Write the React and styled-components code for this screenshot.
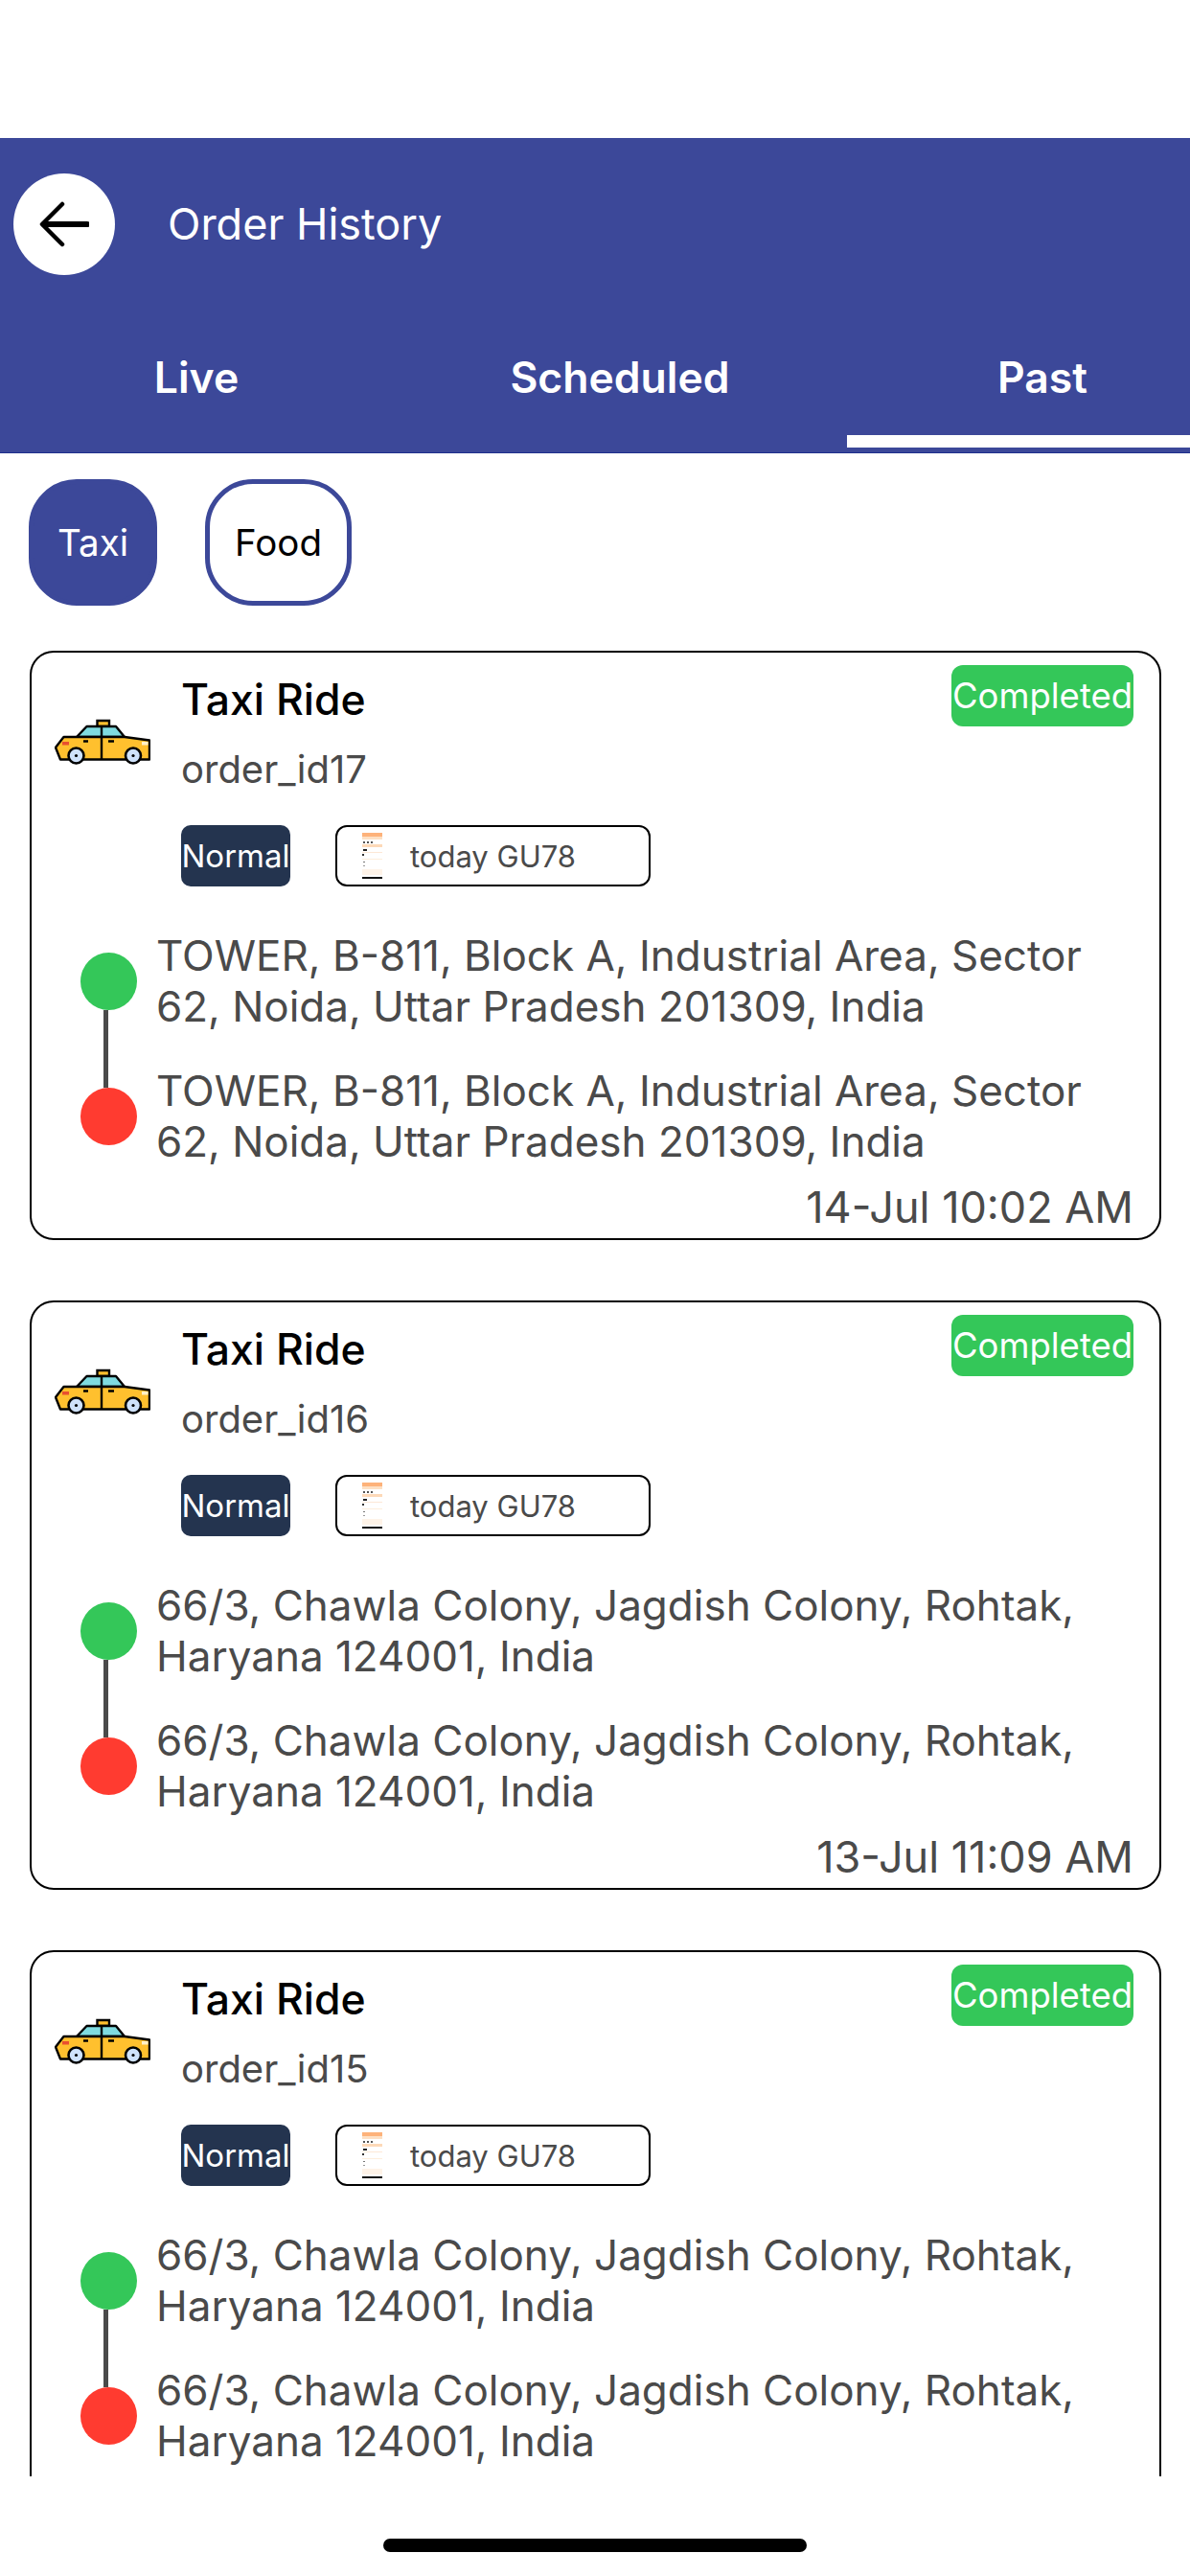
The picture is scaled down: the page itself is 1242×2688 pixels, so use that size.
import React from 'react';
import styled, { createGlobalStyle } from 'styled-components';

const Colors = {
  primary: '#3c4899',
  green: '#34c759',
  red: '#ff3b30',
  navy: '#24344f',
  text: '#4a4a4a',
};

const GlobalStyle = createGlobalStyle`
  * { box-sizing: border-box; }
  html, body { margin: 0; padding: 0; background: #fff; }
  body { font-family: Inter, "Noto Sans", sans-serif; }
  p { margin: 0; }
`;

const Page = styled.div`
  width: 1242px;
  height: 2688px;
  display: flex;
  flex-direction: column;
  background: #fff;
  overflow: hidden;
`;

const StatusSpace = styled.div`
  height: 144px;
  flex: none;
`;

const Header = styled.header`
  height: 329px;
  flex: none;
  padding-top: 37px;
  background: ${Colors.primary};
  border-bottom: 1px solid #1f2f8c;
`;

const TopRow = styled.div`
  display: flex;
  align-items: center;
  height: 106px;
  padding-left: 14px;
`;

const BackButton = styled.div`
  width: 106px;
  height: 106px;
  border-radius: 50%;
  background: #fff;
  display: flex;
  align-items: center;
  justify-content: center;
  margin-right: 55px;
`;

const PageTitle = styled.h1`
  margin: 0;
  font-size: 45px;
  font-weight: 400;
  line-height: 52px;
  color: #fff;
`;

const Tabs = styled.nav`
  display: grid;
  grid-template-columns: 410px 474px 358px;
  margin-top: 81px;
`;

const Tab = styled.div`
  height: 99px;
  padding-left: ${(p) => (p.$active ? '50px' : '0')};
  border-bottom: 13px solid ${(p) => (p.$active ? '#fff' : 'transparent')};
  font-size: 44.5px;
  font-weight: 600;
  line-height: 52px;
  text-align: center;
  color: #fff;
`;

const ChipRow = styled.div`
  display: flex;
  flex: none;
  gap: 50px;
  padding: 27px 0 0 30px;
`;

const Chip = styled.div`
  height: 132px;
  width: ${(p) => (p.$active ? '134px' : '153px')};
  display: flex;
  align-items: center;
  justify-content: center;
  border-radius: 50px;
  border: 5px solid ${Colors.primary};
  background: ${(p) => (p.$active ? Colors.primary : '#fff')};
  color: ${(p) => (p.$active ? '#fff' : '#000')};
  font-size: 38.5px;
`;

const OrderList = styled.div`
  height: 1905px;
  flex: none;
  margin-top: 47px;
  padding: 0 30px 0 31px;
  display: flex;
  flex-direction: column;
  gap: 63px;
  overflow: hidden;
`;

const Card = styled.article`
  flex: none;
  height: 615px;
  padding: 23px 0 0 24px;
  border: 2.5px solid #000;
  border-radius: 25px;
  background: #fff;
`;

const CardHead = styled.div`
  display: flex;
  align-items: flex-start;
`;

const TaxiIcon = styled.svg`
  width: 100px;
  height: 48px;
  flex: none;
  margin: 46px 32px 0 0;
`;

const Info = styled.div`
  flex: 1;
`;

const RideTitle = styled.p`
  font-size: 44.5px;
  font-weight: 500;
  line-height: 52px;
  color: #000;
`;

const OrderId = styled.p`
  margin-top: 25px;
  font-size: 40px;
  line-height: 44px;
  color: ${Colors.text};
`;

const TagRow = styled.div`
  display: flex;
  gap: 47px;
  margin-top: 36px;
`;

const PriorityTag = styled.div`
  width: 114px;
  height: 64px;
  display: flex;
  align-items: center;
  justify-content: center;
  border-radius: 10px;
  background: ${Colors.navy};
  color: #fff;
  font-size: 33px;
  white-space: nowrap;
`;

const VehicleTag = styled.div`
  width: 329px;
  height: 64px;
  display: flex;
  align-items: center;
  padding-left: 26px;
  border: 2.5px solid #000;
  border-radius: 12px;
  font-size: 31px;
  color: ${Colors.text};
`;

const Thumb = styled.svg`
  width: 21px;
  height: 48px;
  flex: none;
  margin-right: 29px;
`;

const StatusTag = styled.div`
  width: 190px;
  height: 64px;
  flex: none;
  margin: -10px 27px 0 0;
  display: flex;
  align-items: center;
  justify-content: center;
  border-radius: 12px;
  background: ${Colors.green};
  color: #fff;
  font-size: 36.5px;
  white-space: nowrap;
`;

const Route = styled.div`
  display: flex;
  margin-top: 46px;
`;

const Rail = styled.div`
  width: 79px;
  flex: none;
  margin-left: 27px;
  padding-top: 23px;
  display: flex;
  flex-direction: column;
`;

const Dot = styled.div`
  width: 59px;
  height: 60px;
  border-radius: 50%;
  background: ${(p) => p.$color};
`;

const RailLine = styled.div`
  width: 5px;
  height: 81px;
  margin-left: 24px;
  background: ${Colors.text};
`;

const Addresses = styled.div`
  flex: 1;
  display: flex;
  flex-direction: column;
  gap: 36px;
  padding-right: 34px;
`;

const Address = styled.p`
  font-size: 44px;
  line-height: 52.5px;
  color: ${Colors.text};
`;

const OrderDate = styled.p`
  margin-top: 17px;
  padding-right: 27px;
  font-size: 45px;
  line-height: 52px;
  text-align: right;
  color: ${Colors.text};
`;

const HomeArea = styled.div`
  flex: 1;
  display: flex;
  justify-content: center;
  padding-top: 65px;
`;

const HomeBar = styled.div`
  width: 442px;
  height: 14px;
  border-radius: 7px;
  background: #000;
`;

function ArrowBack() {
  return (
    <svg width="52" height="48" viewBox="0 0 52 48" fill="none" stroke="#000" strokeLinecap="round" strokeLinejoin="round">
      <path d="M50 24H5" strokeWidth="6" />
      <path d="M24 3L3 24l21 21" strokeWidth="4.5" />
    </svg>
  );
}

function Taxi() {
  return (
    <TaxiIcon viewBox="0 0 100 48">
      <path d="M44.5 8V2h12.5v6z" fill="#ffc02e" stroke="#000" strokeWidth="2.4" />
      <path d="M23 19l10.5-11h30.5l9 11z" fill="#7fdbe0" stroke="#000" strokeWidth="2.4" strokeLinejoin="round" />
      <path d="M9.5 19h63.5l26 3.5v20H6L1 30z" fill="#ffc02e" stroke="#000" strokeWidth="2.4" strokeLinejoin="round" />
      <path d="M49 8v34" stroke="#000" strokeWidth="2.4" />
      <path d="M30 23.5h5M56 23.5h6" stroke="#000" strokeWidth="2.4" />
      <rect x="8" y="24" width="7" height="3.5" fill="#e8502f" />
      <rect x="91" y="24" width="6.5" height="3.5" fill="#fff1c9" />
      <circle cx="22.5" cy="38.5" r="8" fill="#cfe2fb" stroke="#000" strokeWidth="2.6" />
      <circle cx="82" cy="38.5" r="8" fill="#cfe2fb" stroke="#000" strokeWidth="2.6" />
      <circle cx="22.5" cy="38.5" r="1.6" fill="#000" />
      <circle cx="82" cy="38.5" r="1.6" fill="#000" />
    </TaxiIcon>
  );
}

function VehicleThumb() {
  return (
    <Thumb viewBox="0 0 21 48">
      <rect width="21" height="4" fill="#fdb27a" />
      <rect y="4" width="21" height="3" fill="#fde0c4" />
      <rect x="1" y="9" width="2" height="2" fill="#555" />
      <rect x="5" y="9" width="2" height="2" fill="#555" />
      <rect x="9" y="9" width="2" height="2" fill="#555" />
      <rect y="12" width="21" height="3" fill="#fdd9b8" />
      <rect x="1" y="17" width="4" height="2" fill="#222" />
      <rect y="20" width="21" height="1" fill="#fde8d6" />
      <rect y="22" width="2" height="2" fill="#333" />
      <rect y="27" width="21" height="1" fill="#fdeedd" />
      <rect x="1" y="30" width="2" height="1" fill="#777" />
      <rect x="1" y="34" width="2" height="1" fill="#999" />
      <rect y="38" width="21" height="6" fill="#fef3e8" />
      <rect y="46" width="21" height="2" fill="#111" />
    </Thumb>
  );
}

// the third card runs past the bottom of the list, so its date is never visible
const orders = [
  {
    id: 'order_id17',
    address: 'TOWER, B-811, Block A, Industrial Area, Sector 62, Noida, Uttar Pradesh 201309, India',
    date: '14-Jul 10:02 AM',
  },
  {
    id: 'order_id16',
    address: '66/3, Chawla Colony, Jagdish Colony, Rohtak, Haryana 124001, India',
    date: '13-Jul 11:09 AM',
  },
  {
    id: 'order_id15',
    address: '66/3, Chawla Colony, Jagdish Colony, Rohtak, Haryana 124001, India',
  },
];

export default function App() {
  return (
    <Page>
      <GlobalStyle />
      <StatusSpace />
      <Header>
        <TopRow>
          <BackButton>
            <ArrowBack />
          </BackButton>
          <PageTitle>Order History</PageTitle>
        </TopRow>
        <Tabs>
          <Tab>Live</Tab>
          <Tab>Scheduled</Tab>
          <Tab $active>Past</Tab>
        </Tabs>
      </Header>
      <ChipRow>
        <Chip $active>Taxi</Chip>
        <Chip>Food</Chip>
      </ChipRow>
      <OrderList>
        {orders.map((order) => (
          <Card key={order.id}>
            <CardHead>
              <Taxi />
              <Info>
                <RideTitle>Taxi Ride</RideTitle>
                <OrderId>{order.id}</OrderId>
                <TagRow>
                  <PriorityTag>Normal</PriorityTag>
                  <VehicleTag>
                    <VehicleThumb />
                    today GU78
                  </VehicleTag>
                </TagRow>
              </Info>
              <StatusTag>Completed</StatusTag>
            </CardHead>
            <Route>
              <Rail>
                <Dot $color={Colors.green} />
                <RailLine />
                <Dot $color={Colors.red} />
              </Rail>
              <Addresses>
                <Address>{order.address}</Address>
                <Address>{order.address}</Address>
              </Addresses>
            </Route>
            {order.date && <OrderDate>{order.date}</OrderDate>}
          </Card>
        ))}
      </OrderList>
      <HomeArea>
        <HomeBar />
      </HomeArea>
    </Page>
  );
}
